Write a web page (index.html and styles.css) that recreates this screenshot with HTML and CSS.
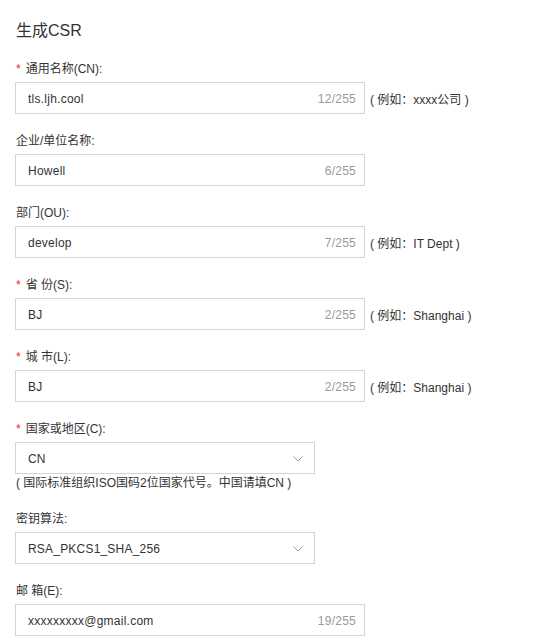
FILE: index.html
```html
<!DOCTYPE html>
<html lang="zh-CN">
<head>
    <meta charset="UTF-8">
    <meta name="viewport" content="width=device-width, initial-scale=1.0">
    <title>生成CSR</title>
    <link rel="stylesheet" href="styles.css">
</head>
<body>
    <main class="csr-form">
        <h2 class="form-title">生成CSR</h2>

        <div class="field">
            <label class="field-label"><span class="required">*</span>通用名称(CN):</label>
            <div class="field-row">
                <div class="text-input">
                    <input type="text" value="tls.ljh.cool">
                    <span class="counter">12/255</span>
                </div>
                <span class="hint">( 例如：xxxx公司 )</span>
            </div>
        </div>

        <div class="field">
            <label class="field-label">企业/单位名称:</label>
            <div class="field-row">
                <div class="text-input">
                    <input type="text" value="Howell">
                    <span class="counter">6/255</span>
                </div>
            </div>
        </div>

        <div class="field">
            <label class="field-label">部门(OU):</label>
            <div class="field-row">
                <div class="text-input">
                    <input type="text" value="develop">
                    <span class="counter">7/255</span>
                </div>
                <span class="hint">( 例如：IT Dept )</span>
            </div>
        </div>

        <div class="field">
            <label class="field-label"><span class="required">*</span>省 份(S):</label>
            <div class="field-row">
                <div class="text-input">
                    <input type="text" value="BJ">
                    <span class="counter">2/255</span>
                </div>
                <span class="hint">( 例如：Shanghai )</span>
            </div>
        </div>

        <div class="field">
            <label class="field-label"><span class="required">*</span>城 市(L):</label>
            <div class="field-row">
                <div class="text-input">
                    <input type="text" value="BJ">
                    <span class="counter">2/255</span>
                </div>
                <span class="hint">( 例如：Shanghai )</span>
            </div>
        </div>

        <div class="field">
            <label class="field-label"><span class="required">*</span>国家或地区(C):</label>
            <div class="select-box">
                <span>CN</span>
                <svg class="chevron" width="10" height="6" viewBox="0 0 10 6"><path d="M0.5 0.5 L5 5 L9.5 0.5" fill="none" stroke="#999" stroke-width="1"/></svg>
            </div>
            <p class="field-note">( 国际标准组织ISO国码2位国家代号。中国请填CN )</p>
        </div>

        <div class="field">
            <label class="field-label">密钥算法:</label>
            <div class="select-box">
                <span>RSA_PKCS1_SHA_256</span>
                <svg class="chevron" width="10" height="6" viewBox="0 0 10 6"><path d="M0.5 0.5 L5 5 L9.5 0.5" fill="none" stroke="#999" stroke-width="1"/></svg>
            </div>
        </div>

        <div class="field">
            <label class="field-label">邮 箱(E):</label>
            <div class="field-row">
                <div class="text-input">
                    <input type="text" value="xxxxxxxxx@gmail.com">
                    <span class="counter">19/255</span>
                </div>
            </div>
        </div>
    </main>
</body>
</html>
```

FILE: styles.css
```css
body {
    font-family: "Liberation Sans", "Noto Sans CJK SC", sans-serif;
    margin: 0;
    padding: 0;
    background-color: #fff;
    color: #333;
}

.csr-form {
    padding: 19px 15px 0;
}

.form-title {
    font-size: 16px;
    line-height: 24px;
    font-weight: normal;
    margin: 0 0 17px 1px;
}

.field {
    margin-bottom: 18px;
}

.field-label {
    display: block;
    font-size: 12px;
    line-height: 18px;
    margin: 0 0 4px 1px;
}

.required {
    color: #e02d2d;
    margin-right: 5px;
}

.field-row {
    display: flex;
    align-items: center;
}

.text-input {
    display: flex;
    align-items: center;
    width: 350px;
    height: 32px;
    box-sizing: border-box;
    border: 1px solid #d4d4d4;
    background: #fff;
    padding: 1px 8px 0 12px;
}

.text-input input {
    flex: 1;
    min-width: 0;
    border: none;
    outline: none;
    padding: 0;
    font-family: inherit;
    font-size: 12px;
    letter-spacing: 0.25px;
    color: #333;
    background: transparent;
}

.counter {
    font-size: 12px;
    letter-spacing: 0.25px;
    color: #999;
    margin-left: 8px;
}

.hint {
    font-size: 12px;
    margin-left: 5px;
}

.select-box {
    display: flex;
    align-items: center;
    justify-content: space-between;
    width: 300px;
    height: 32px;
    box-sizing: border-box;
    border: 1px solid #d4d4d4;
    background: #fff;
    padding: 1px 11px 0 12px;
    font-size: 12px;
    letter-spacing: 0.2px;
}

.field-note {
    font-size: 12px;
    line-height: 18px;
    margin: 0 0 0 1px;
}
```
